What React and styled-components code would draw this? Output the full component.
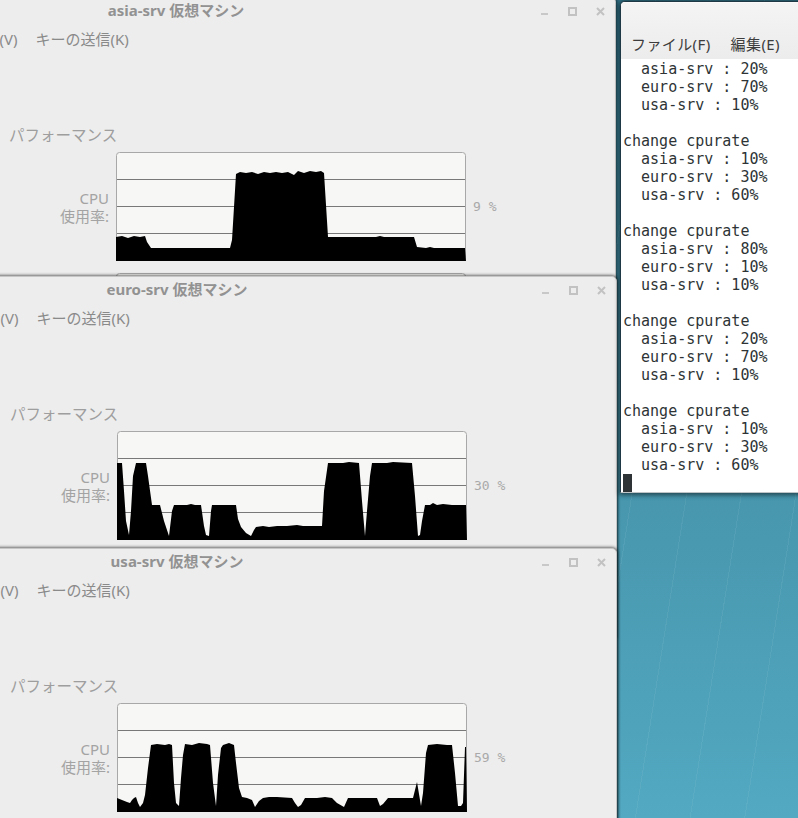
import React from 'react';
import styled, { createGlobalStyle } from 'styled-components';

const Global = createGlobalStyle`
  *, *::before, *::after { box-sizing: border-box; }
  html, body { margin: 0; padding: 0; }
  body { width: 798px; height: 818px; overflow: hidden; background: #3f8ea6; }
`;

const Desktop = styled.div`
  position: relative;
  width: 798px;
  height: 818px;
  overflow: hidden;
  background:
    repeating-linear-gradient(99deg, transparent 0 53px, rgba(255,255,255,0.06) 53px 54px),
    linear-gradient(180deg, #2f6f84 0%, #4694ab 55%, #52a9c1 100%);
`;

/* ---------- VM windows ---------- */

const VmWindow = styled.section`
  position: absolute;
  left: ${p => p.$left}px;
  top: ${p => p.$top}px;
  width: 880px;
  height: 640px;
  background: #ededed;
  border: 1px solid #c6c6c6;
  border-radius: 5px 5px 0 0;
  box-shadow: 0 0 3px 1px rgba(0, 0, 0, 0.55);
  display: flex;
  flex-direction: column;
  overflow: hidden;
  font-family: "Noto Sans", "Noto Sans CJK JP", sans-serif;
`;

const TitleBar = styled.header`
  height: 24px;
  display: grid;
  grid-template-columns: 1fr auto 1fr;
  align-items: center;
`;

const Title = styled.h1`
  grid-column: 2;
  margin: 0;
  font-size: 15px;
  font-weight: 700;
  color: #929292;
  line-height: 20px;
  white-space: nowrap;
`;

const WinButtons = styled.div`
  grid-column: 3;
  justify-self: end;
  display: flex;
  align-items: center;
  gap: 19px;
  padding-top: 3px;
  margin-right: 10px;
`;

const WinIcon = styled.svg`
  display: block;
  width: 9px;
  height: 9px;
`;

const MenuBar = styled.nav`
  height: 32px;
  display: flex;
  align-items: center;
  gap: 18px;
  padding-left: ${p => p.$pad}px;
  font-size: 15px;
  color: #8a8a8a;
  white-space: nowrap;
`;

const Toolbar = styled.div`
  height: 62px;
`;

const Body = styled.div`
  flex: 1;
  display: flex;
`;

const Sidebar = styled.aside`
  width: 262px;
  flex: none;
`;

const Pane = styled.div`
  padding: 9px 10px 0 10px;
  display: flex;
  flex-direction: column;
`;

const Heading = styled.h2`
  margin: 0 0 7px 0;
  font-size: 15.5px;
  font-weight: 400;
  line-height: 20px;
  color: #9e9e9e;
`;

const Metrics = styled.div`
  display: grid;
  grid-template-columns: 100px 350px auto;
  column-gap: 7px;
  row-gap: 12px;
  align-items: center;
`;

const MetricLabel = styled.div`
  text-align: right;
  font-size: 15px;
  line-height: 18px;
  color: #a3a3a3;
  white-space: pre-line;
`;

const MetricValue = styled.div`
  font-family: "DejaVu Sans Mono", monospace;
  font-size: 13px;
  color: #a9a9a9;
  white-space: pre;
`;

const ChartSvg = styled.svg`
  display: block;
  width: 350px;
  height: 109px;
`;

function Chart({ data }) {
  const pts = [[0, 109], ...data, [350, 109]].map(([x, y]) => `${x},${y}`).join(' ');
  return (
    <ChartSvg viewBox="0 0 350 109">
      <rect x="0.5" y="0.5" width="349" height="108" rx="3" fill="#f7f7f5" stroke="#a8a8a8" />
      {[27, 54, 81].map(y => (
        <line key={y} x1="1" x2="349" y1={y + 0.5} y2={y + 0.5} stroke="#787878" strokeWidth="1" />
      ))}
      {data.length > 0 && <polygon points={pts} fill="#000" />}
    </ChartSvg>
  );
}

const asiaData = [[0,85],[6,84],[12,86],[18,84],[24,85],[29,84],[31,90],[35,96],[114,96],[116,88],[120,22],[124,20],[130,21],[136,20],[142,22],[148,20],[154,21],[160,20],[166,21],[172,20],[178,23],[182,19],[188,21],[194,19],[200,20],[205,19],[208,21],[212,85],[260,85],[264,84],[268,85],[298,85],[301,95],[310,96],[314,95],[318,96],[349,96]];

const euroData = [[0,32],[5,32],[7,60],[9,90],[12,104],[14,80],[16,45],[19,32],[29,32],[31,45],[35,74],[43,74],[47,90],[52,105],[55,80],[57,74],[70,74],[74,73],[78,74],[84,74],[87,95],[89,104],[92,105],[94,80],[95,74],[119,74],[121,88],[124,96],[129,102],[134,105],[137,99],[139,96],[146,95],[152,96],[160,95],[170,95],[180,94],[186,95],[205,95],[207,60],[211,32],[226,32],[232,31],[242,32],[245,70],[248,105],[250,80],[253,45],[255,32],[270,32],[276,31],[295,32],[298,65],[301,105],[303,104],[305,90],[308,74],[313,74],[316,72],[320,74],[326,73],[335,74],[349,74]];

const usaData = [[0,95],[5,97],[10,99],[13,100],[15,97],[17,95],[19,94],[21,100],[23,104],[26,100],[28,92],[31,65],[34,42],[40,41],[48,42],[52,41],[55,42],[57,80],[59,100],[62,103],[64,75],[66,52],[68,41],[75,42],[82,40],[90,41],[93,42],[96,80],[99,103],[101,72],[104,45],[106,42],[112,40],[117,42],[119,60],[122,85],[125,94],[130,95],[135,97],[138,104],[142,98],[146,95],[152,94],[160,94],[175,95],[178,100],[181,104],[184,102],[188,95],[200,95],[208,94],[215,95],[220,100],[227,104],[231,95],[245,95],[260,95],[263,103],[266,101],[271,95],[296,95],[300,79],[304,103],[306,90],[309,50],[311,42],[320,41],[330,42],[335,42],[338,70],[341,103],[344,103],[346,100],[348,44],[349,44]];

function WindowButtons() {
  return (
    <WinButtons>
      <WinIcon viewBox="0 0 9 9"><rect x="1" y="6" width="7" height="2" fill="#c8c8c8" /></WinIcon>
      <WinIcon viewBox="0 0 9 9"><rect x="1" y="1" width="7" height="7" fill="none" stroke="#c2c2c2" strokeWidth="2" /></WinIcon>
      <WinIcon viewBox="0 0 9 9"><path d="M1 1 L8 8 M8 1 L1 8" stroke="#c2c2c2" strokeWidth="2" /></WinIcon>
    </WinButtons>
  );
}

function VmWin({ name, top, left, cpu, data }) {
  return (
    <VmWindow $top={top} $left={left}>
      <TitleBar>
        <Title>{name} 仮想マシン</Title>
        <WindowButtons />
      </TitleBar>
      <MenuBar $pad={22}>
        <span>ファイル(F)</span>
        <span>仮想マシン(M)</span>
        <span>表示(V)</span>
        <span>キーの送信(K)</span>
      </MenuBar>
      <Toolbar />
      <Body>
        <Sidebar />
        <Pane>
          <Heading>パフォーマンス</Heading>
          <Metrics>
            <MetricLabel>{'CPU\n使用率:'}</MetricLabel>
            <Chart data={data} />
            <MetricValue>{cpu} %</MetricValue>
            <MetricLabel />
            <Chart data={[[0, 60], [349, 60]]} />
            <MetricValue />
          </Metrics>
        </Pane>
      </Body>
    </VmWindow>
  );
}

/* ---------- Terminal ---------- */

const Terminal = styled.section`
  position: absolute;
  left: 620px;
  top: 1px;
  width: 300px;
  height: 492px;
  background: #ffffff;
  border: 1px solid #1e3945;
  border-bottom-color: #bfc4c6;
  border-radius: 5px 5px 0 0;
  box-shadow: 0 1px 5px 1px rgba(0, 0, 0, 0.55);
  display: flex;
  flex-direction: column;
  overflow: hidden;
`;

const TermHeader = styled.header`
  background: linear-gradient(180deg, #f4f4f4 0%, #ececec 100%);
  border-top: 1px solid #fafafa;
`;

const TermTitle = styled.div`
  height: 25px;
`;

const TermMenu = styled.nav`
  height: 31px;
  display: flex;
  align-items: center;
  gap: 20px;
  padding-left: 10px;
  font-family: "Noto Sans", "Noto Sans CJK JP", sans-serif;
  font-size: 15px;
  letter-spacing: 0.4px;
  color: #3d3d3d;
`;

const TermBody = styled.pre`
  margin: 0;
  padding: 1px 0 0 2px;
  font-family: "DejaVu Sans Mono", monospace;
  font-size: 15px;
  line-height: 18px;
  color: #2e3436;
`;

const Cursor = styled.span`
  display: inline-block;
  width: 9px;
  height: 18px;
  vertical-align: top;
  background: #2e3436;
`;

const termLines = [
  '  asia-srv : 20%',
  '  euro-srv : 70%',
  '  usa-srv : 10%',
  '',
  'change cpurate',
  '  asia-srv : 10%',
  '  euro-srv : 30%',
  '  usa-srv : 60%',
  '',
  'change cpurate',
  '  asia-srv : 80%',
  '  euro-srv : 10%',
  '  usa-srv : 10%',
  '',
  'change cpurate',
  '  asia-srv : 20%',
  '  euro-srv : 70%',
  '  usa-srv : 10%',
  '',
  'change cpurate',
  '  asia-srv : 10%',
  '  euro-srv : 30%',
  '  usa-srv : 60%',
];

export default function App() {
  return (
    <>
      <Global />
      <Desktop>
        <VmWin name="asia-srv" top={-3} left={-264} cpu="9" data={asiaData} />
        <VmWin name="euro-srv" top={276} left={-263} cpu="30" data={euroData} />
        <VmWin name="usa-srv" top={548} left={-263} cpu="59" data={usaData} />
        <Terminal>
          <TermHeader>
            <TermTitle />
            <TermMenu>
              <span>ファイル(F)</span>
              <span>編集(E)</span>
            </TermMenu>
          </TermHeader>
          <TermBody>
            {termLines.join('\n') + '\n'}
            <Cursor />
          </TermBody>
        </Terminal>
      </Desktop>
    </>
  );
}
